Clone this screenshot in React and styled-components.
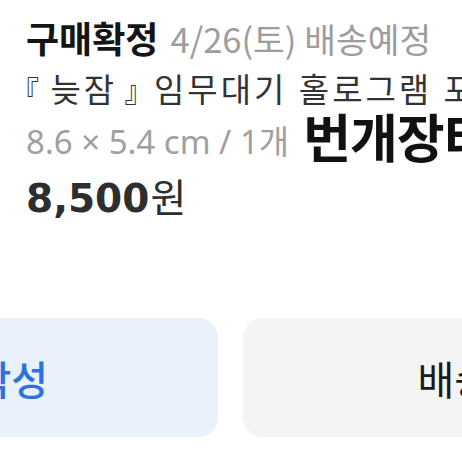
import React from 'react'
import styled, { createGlobalStyle } from 'styled-components'

const Global = createGlobalStyle`
  html, body {
    margin: 0;
    padding: 0;
    width: 462px;
    height: 462px;
    overflow: hidden;
    background: #ffffff;
  }
  body {
    font-family: "Noto Sans CJK KR", "Noto Sans", sans-serif;
  }
`

const App = () => (
  <Page>
    <Global />
    <Info>
      <StatusLine>
        <Status>구매확정</Status>
        <Eta>4/26(토) 배송예정</Eta>
      </StatusLine>
      <ProductName>
        <Bracket $open>『</Bracket> 늦잠 <Bracket>』</Bracket> 임무대기 홀로그램 포토카드
      </ProductName>
      <OptionLine>
        <Option>8.6 × 5.4 cm / 1개</Option>
        <Watermark>번개장터</Watermark>
      </OptionLine>
      <PriceLine>
        <Amount>8,500</Amount>
        <Won>원</Won>
      </PriceLine>
    </Info>
    <Actions>
      <ActionButton $primary>후기 작성</ActionButton>
      <ActionButton>배송조회</ActionButton>
    </Actions>
  </Page>
)

// Styles
const Page = styled.div`
  width: 462px;
  height: 462px;
  overflow: hidden;
  white-space: nowrap;
`

const Info = styled.div`
  padding: 17px 0 0 26px;
`

const StatusLine = styled.div`
  display: flex;
  align-items: baseline;
  gap: 12px;
  line-height: 40px;
`

const Status = styled.span`
  font-size: 36px;
  font-weight: 700;
  color: #151515;
`

const Eta = styled.span`
  font-size: 34.5px;
  font-weight: 400;
  color: #9d9d9d;
`

const ProductName = styled.div`
  font-size: 33px;
  line-height: 60px;
  color: #333333;
  letter-spacing: 3px;
  word-spacing: 1px;
`

const Bracket = styled.span`
  font-size: 28px;
  letter-spacing: 0;
  margin-left: ${p => (p.$open ? '-15px' : '-4px')};
  margin-right: ${p => (p.$open ? '0' : '-10px')};
`

const OptionLine = styled.div`
  font-family: "Noto Sans", "Noto Sans CJK KR", sans-serif;
  font-size: 33px;
  line-height: 44px;
  color: #a0a0a0;
`

const Option = styled.span``

const Watermark = styled.span`
  font-family: "Noto Sans CJK KR", sans-serif;
  font-size: 52px;
  font-weight: 700;
  color: #111111;
  line-height: 0;
  vertical-align: -4px;
  margin-left: 14px;
  letter-spacing: -1px;
`

const PriceLine = styled.div`
  display: flex;
  align-items: baseline;
  line-height: 62px;
  color: #2e2e2e;
`

const Amount = styled.span`
  font-family: "DejaVu Sans", "Noto Sans", sans-serif;
  font-size: 39px;
  font-weight: 700;
`

const Won = styled.span`
  font-size: 39px;
  font-weight: 400;
  margin-left: 1px;
`

const Actions = styled.div`
  display: flex;
  gap: 25px;
  margin: 88px 0 0 -278px;
`

const ActionButton = styled.div`
  flex: 0 0 496px;
  height: 119px;
  border-radius: 20px;
  display: flex;
  align-items: center;
  justify-content: center;
  font-size: 40px;
  font-weight: ${p => (p.$primary ? 500 : 400)};
  background: ${p => (p.$primary ? '#eaf1fd' : '#f4f4f5')};
  color: ${p => (p.$primary ? '#2d72e0' : '#1a1a1a')};
`

export default App
